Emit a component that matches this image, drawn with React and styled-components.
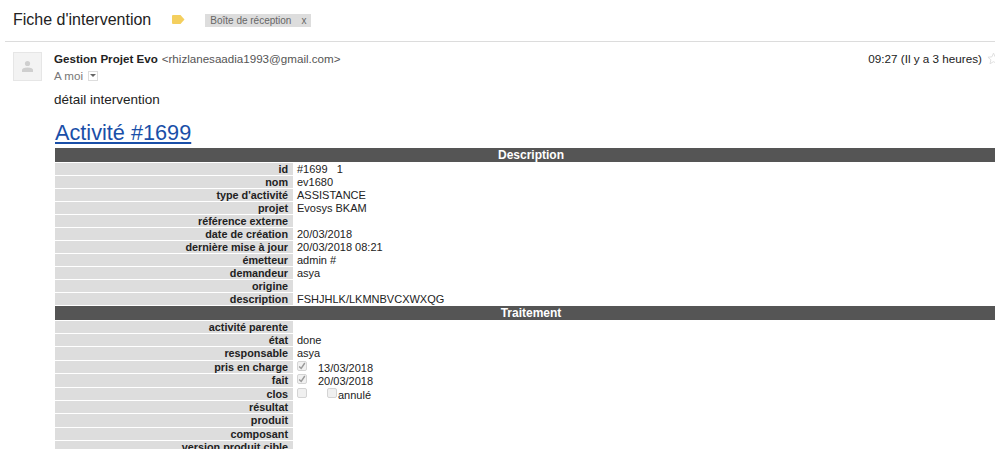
import React from "react";
import styled, { createGlobalStyle } from "styled-components";

const Global = createGlobalStyle`
  html, body { margin: 0; padding: 0; background: #fff; overflow: hidden; height: 449px; }
  body { font-family: "Liberation Sans", Arial, sans-serif; }
`;
const Page = styled.div`width: 995px; height: 449px; overflow: hidden;`;
const Header = styled.header`
  display: flex; align-items: center; height: 41px; margin-left: 5px; padding-left: 8px;
  border-bottom: 1px solid #dcdcdc;
`;
const Title = styled.h1`font-size: 16px; font-weight: 400; color: #222; margin: 0 0 2px;`;
const LabelIcon = styled.svg`width: 13px; height: 9px; margin-left: 21px; margin-bottom: 2px;`;
const Chip = styled.span`
  display: flex; gap: 10px; align-items: center; height: 13px; margin-left: 20px; padding: 0 5px 0 5px;
  background: #dddddd; color: #666; font-size: 10px;
`;
const Message = styled.section`display: flex; padding: 10px 0 0 13px;`;
const Avatar = styled.div`
  width: 27px; height: 27px; background: #f3f3f3; border: 1px solid #e6e6e6;
  display: flex; align-items: center; justify-content: center; flex: none;
`;
const Body = styled.div`flex: 1; margin-left: 12px; min-width: 0;`;
const MetaRow = styled.div`display: flex; justify-content: space-between; height: 12px; align-items: center;`;
const Sender = styled.div`font-size: 11.6px; color: #555; white-space: nowrap;`;
const SenderName = styled.b`font-weight: 700; color: #222; margin-right: 4px;`;
const Time = styled.div`display: flex; align-items: center; font-size: 11.7px; color: #222; white-space: nowrap;`;
const Star = styled.svg`width: 13px; height: 13px; margin-left: 5px; margin-right: -5px;`;
const To = styled.div`display: flex; align-items: center; gap: 5px; font-size: 11.6px; color: #777; height: 15px; margin-top: 4px;`;
const Caret = styled.span`
  width: 8px; height: 8px; border: 1px solid #ddd; display: flex; align-items: center; justify-content: center;
  &::after { content: ""; border: 3px solid transparent; border-top: 3px solid #666; border-bottom: 0; }
`;
const Intro = styled.p`font-size: 13.5px; color: #222; margin: 9px 0 0; line-height: 15px;`;
const Heading = styled.a`
  display: block; font-size: 21.7px; line-height: 25px; color: #1a4fa8; text-decoration: underline;
  margin: 13px 0 0 1px; width: max-content;
`;
const Sheet = styled.table`
  width: 952px; border-collapse: separate; border-spacing: 0; table-layout: fixed; margin: 3px 0 0 1px;
`;
const Section = styled.th`
  background: #555; color: #fff; height: 15px; box-sizing: border-box; padding: 0; font-size: 12px; line-height: 13px;
  font-weight: 700; text-align: center; border-bottom: 1px solid #fff;
`;
const Label = styled.th`
  background: #dddddd; color: #222; font-size: 10.8px; font-weight: 700; text-align: right; padding: 0 5px 0 0; box-sizing: border-box;
  height: ${p => p.$h}px; line-height: 12px; border-bottom: 1px solid #fff; white-space: nowrap; vertical-align: top;
`;
const Value = styled.td`
  padding: 0 0 0 4px; box-sizing: border-box; color: #222; font-size: 11px; height: ${p => p.$h}px; line-height: 12px;
  border-bottom: 1px solid #fff; white-space: pre; vertical-align: top;
`;
const Box = styled.span`
  display: inline-flex; align-items: center; justify-content: center; vertical-align: top; box-sizing: border-box;
  width: 10px; height: 10px; background: #f0f0f0; border: 1px solid #d4d4d4; border-radius: 2px;
  margin-left: ${p => p.$left || 0}px;
`;
const FlagText = styled.span`margin-left: ${p => p.$gap}px; position: relative; top: 1px;`;

const Tick = () => (
  <svg width="8" height="8" viewBox="0 0 8 8"><path d="M1.2 4.4 L3.2 6.4 L6.8 1" fill="none" stroke="#999" strokeWidth="1.4" /></svg>
);

const first = [
  ["id", "#1699   1"], ["nom", "ev1680"], ["type d'activité", "ASSISTANCE"], ["projet", "Evosys BKAM"],
  ["référence externe", ""], ["date de création", "20/03/2018"], ["dernière mise à jour", "20/03/2018 08:21"],
  ["émetteur", "admin #"], ["demandeur", "asya"], ["origine", ""], ["description", "FSHJHLK/LKMNBVCXWXQG"],
];
const Row = ({ label, h = 13, children }) => <tr><Label $h={h}>{label}</Label><Value $h={h}>{children}</Value></tr>;

export default function App() {
  return (
    <Page>
      <Global />
      <Header>
        <Title>Fiche d'intervention</Title>
        <LabelIcon viewBox="0 0 13 9"><path d="M1 0H8.5L12.5 4.5 8.5 9H1Q0 9 0 8V1Q0 0 1 0Z" fill="#f4cf5e" /></LabelIcon>
        <Chip><span>Boîte de réception</span><span>x</span></Chip>
      </Header>
      <Message>
        <Avatar>
          <svg width="13" height="13" viewBox="0 0 13 13">
            <circle cx="6.5" cy="3.5" r="2.6" fill="#cfcfcf" />
            <path d="M1 12V10Q1 7.5 6.5 7.5T12 10V12Z" fill="#cfcfcf" />
          </svg>
        </Avatar>
        <Body>
          <MetaRow>
            <Sender><SenderName>Gestion Projet Evo</SenderName>&lt;rhizlanesaadia1993@gmail.com&gt;</Sender>
            <Time>09:27 (Il y a 3 heures)
              <Star viewBox="0 0 14 14"><path d="M7 1.2 8.7 5.2 13 5.6 9.8 8.4 10.8 12.7 7 10.4 3.2 12.7 4.2 8.4 1 5.6 5.3 5.2Z" fill="none" stroke="#ddd" /></Star>
            </Time>
          </MetaRow>
          <To>A moi <Caret /></To>
          <Intro>détail intervention</Intro>
          <Heading>Activité #1699</Heading>
          <Sheet>
            <colgroup><col style={{ width: 238 }} /><col /></colgroup>
            <tbody>
              <tr><Section colSpan={2}>Description</Section></tr>
              {first.map(([l, v]) => <Row key={l} label={l}>{v}</Row>)}
              <tr><Section colSpan={2}>Traitement</Section></tr>
              <Row label="activité parente" />
              <Row label="état">done</Row>
              <Row label="responsable" h={14}>asya</Row>
              <Row label="pris en charge"><Box><Tick /></Box><FlagText $gap={11}>13/03/2018</FlagText></Row>
              <Row label="fait" h={14}><Box><Tick /></Box><FlagText $gap={11}>20/03/2018</FlagText></Row>
              <Row label="clos"><Box /><Box $left={20} /><FlagText $gap={1}>annulé</FlagText></Row>
              <Row label="résultat" />
              <Row label="produit" h={14} />
              <Row label="composant" />
              <Row label="version produit cible" />
            </tbody>
          </Sheet>
        </Body>
      </Message>
    </Page>
  );
}
